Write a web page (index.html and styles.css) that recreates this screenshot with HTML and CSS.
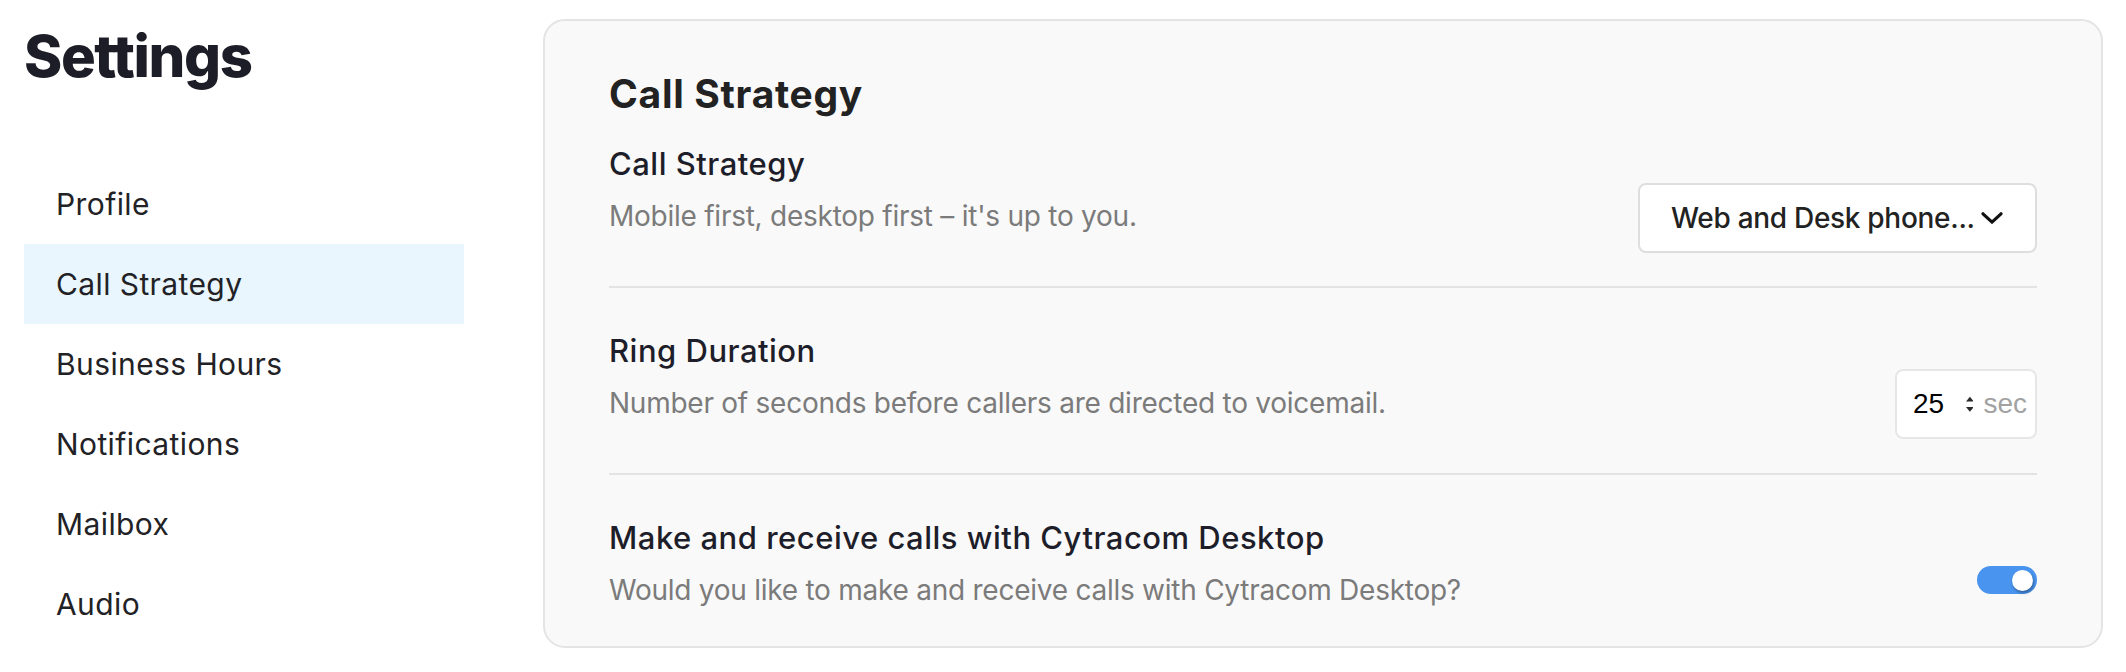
FILE: index.html
```html
<!DOCTYPE html>
<html lang="en">
<head>
<meta charset="utf-8">
<title>Settings</title>
<link rel="stylesheet" href="styles.css">
</head>
<body>
<div class="page">
  <aside class="sidebar">
    <h1 class="page-title">Settings</h1>
    <nav class="nav">
      <a class="nav-item">Profile</a>
      <a class="nav-item active">Call Strategy</a>
      <a class="nav-item">Business Hours</a>
      <a class="nav-item">Notifications</a>
      <a class="nav-item">Mailbox</a>
      <a class="nav-item">Audio</a>
    </nav>
  </aside>
  <main class="card">
    <h2 class="card-title">Call Strategy</h2>
    <section class="setting">
      <div class="setting-text">
        <div class="setting-label">Call Strategy</div>
        <div class="setting-desc">Mobile first, desktop first – it's up to you.</div>
      </div>
      <div class="select">
        <span class="select-value">Web and Desk phone...</span>
        <svg class="chevron" width="22" height="12" viewBox="0 0 22 12"><path d="M2 1.8 L11 10.2 L20 1.8" fill="none" stroke="#111" stroke-width="3.2" stroke-linecap="round" stroke-linejoin="round"/></svg>
      </div>
    </section>
    <section class="setting">
      <div class="setting-text">
        <div class="setting-label">Ring Duration</div>
        <div class="setting-desc">Number of seconds before callers are directed to voicemail.</div>
      </div>
      <div class="number">
        <span class="number-value">25</span>
        <svg class="spinner" width="8" height="17" viewBox="0 0 8 17"><path d="M0 5.5 L4 0.5 L8 5.5 Z" fill="#2a2a2a"/><path d="M0 11 L4 16 L8 11 Z" fill="#2a2a2a"/></svg>
        <span class="number-unit">sec</span>
      </div>
    </section>
    <section class="setting">
      <div class="setting-text">
        <div class="setting-label">Make and receive calls with Cytracom Desktop</div>
        <div class="setting-desc">Would you like to make and receive calls with Cytracom Desktop?</div>
      </div>
      <div class="toggle on"><span class="toggle-knob"></span></div>
    </section>
  </main>
</div>
</body>
</html>
```
FILE: styles.css
```css
* { box-sizing: border-box; }

html, body {
  margin: 0;
  padding: 0;
  background: #ffffff;
}

body {
  font-family: Inter, "Noto Sans", "Liberation Sans", sans-serif;
  color: #222226;
}

.page {
  display: flex;
  align-items: flex-start;
  gap: 79px;
  padding: 19px 23px 0 24px;
}

.sidebar {
  width: 440px;
  flex: 0 0 440px;
}

.page-title {
  margin: 2px 0 0 0;
  font-size: 58px;
  line-height: 70px;
  font-weight: 800;
  letter-spacing: -1.4px;
  color: #1d1d27;
}

.nav {
  display: flex;
  flex-direction: column;
  margin-top: 73px;
}

.nav-item {
  display: block;
  height: 80px;
  line-height: 80px;
  padding-left: 32px;
  font-size: 30px;
  font-weight: 400;
  color: #222226;
  letter-spacing: 0.4px;
}

.nav-item.active {
  background: #e9f6fe;
}

.card {
  flex: 1;
  background: #f9f9f9;
  border: 2px solid #e4e4e4;
  border-radius: 22px;
  padding: 49px 64px 0 64px;
}

.card-title {
  margin: 0;
  font-size: 39px;
  line-height: 48px;
  font-weight: 700;
  color: #222222;
  letter-spacing: 0.7px;
}

.setting {
  display: flex;
  align-items: center;
  justify-content: space-between;
  gap: 40px;
}

.setting:first-of-type {
  margin-top: 26px;
}

.setting + .setting {
  border-top: 2px solid #e3e3e3;
  padding-top: 43px;
}

.setting-text {
  padding-bottom: 50px;
}

.setting:last-of-type .setting-text {
  padding-bottom: 36px;
}

.setting-label {
  font-size: 31px;
  line-height: 40px;
  font-weight: 500;
  color: #1e1e2a;
  letter-spacing: 0.5px;
}

.setting-desc {
  margin-top: 12px;
  font-size: 28px;
  line-height: 40px;
  font-weight: 400;
  color: #7b7b7b;
  letter-spacing: -0.25px;
}

.select {
  display: flex;
  align-items: center;
  justify-content: space-between;
  flex: 0 0 399px;
  width: 399px;
  height: 70px;
  padding: 0 32px 0 31px;
  background: #ffffff;
  border: 2px solid #dedede;
  border-radius: 8px;
  margin-top: 6px;
}

.select-value {
  font-size: 28px;
  font-weight: 500;
  color: #222222;
  white-space: nowrap;
  letter-spacing: -0.3px;
}

.chevron {
  display: block;
  flex: 0 0 22px;
}

.number {
  display: flex;
  align-items: center;
  flex: 0 0 142px;
  width: 142px;
  height: 70px;
  padding: 0 8px 0 16px;
  background: #ffffff;
  border: 2px solid #e6e6e6;
  border-radius: 8px;
  margin-top: 4px;
  font-family: "Liberation Sans", Arial, sans-serif;
  font-size: 28px;
}

.number-value {
  width: 54px;
  color: #000000;
}

.spinner {
  display: block;
  margin-right: 10px;
}

.number-unit {
  color: #a2a2a2;
}

.toggle {
  display: flex;
  align-items: center;
  justify-content: flex-end;
  flex: 0 0 60px;
  width: 60px;
  height: 28px;
  padding: 0 4px;
  border-radius: 14px;
  background: #4894ee;
  margin-top: -4px;
}

.toggle-knob {
  display: block;
  width: 21px;
  height: 21px;
  border-radius: 50%;
  background: #ffffff;
  box-shadow: 1px 2px 3px rgba(0, 0, 0, 0.35);
}
```
